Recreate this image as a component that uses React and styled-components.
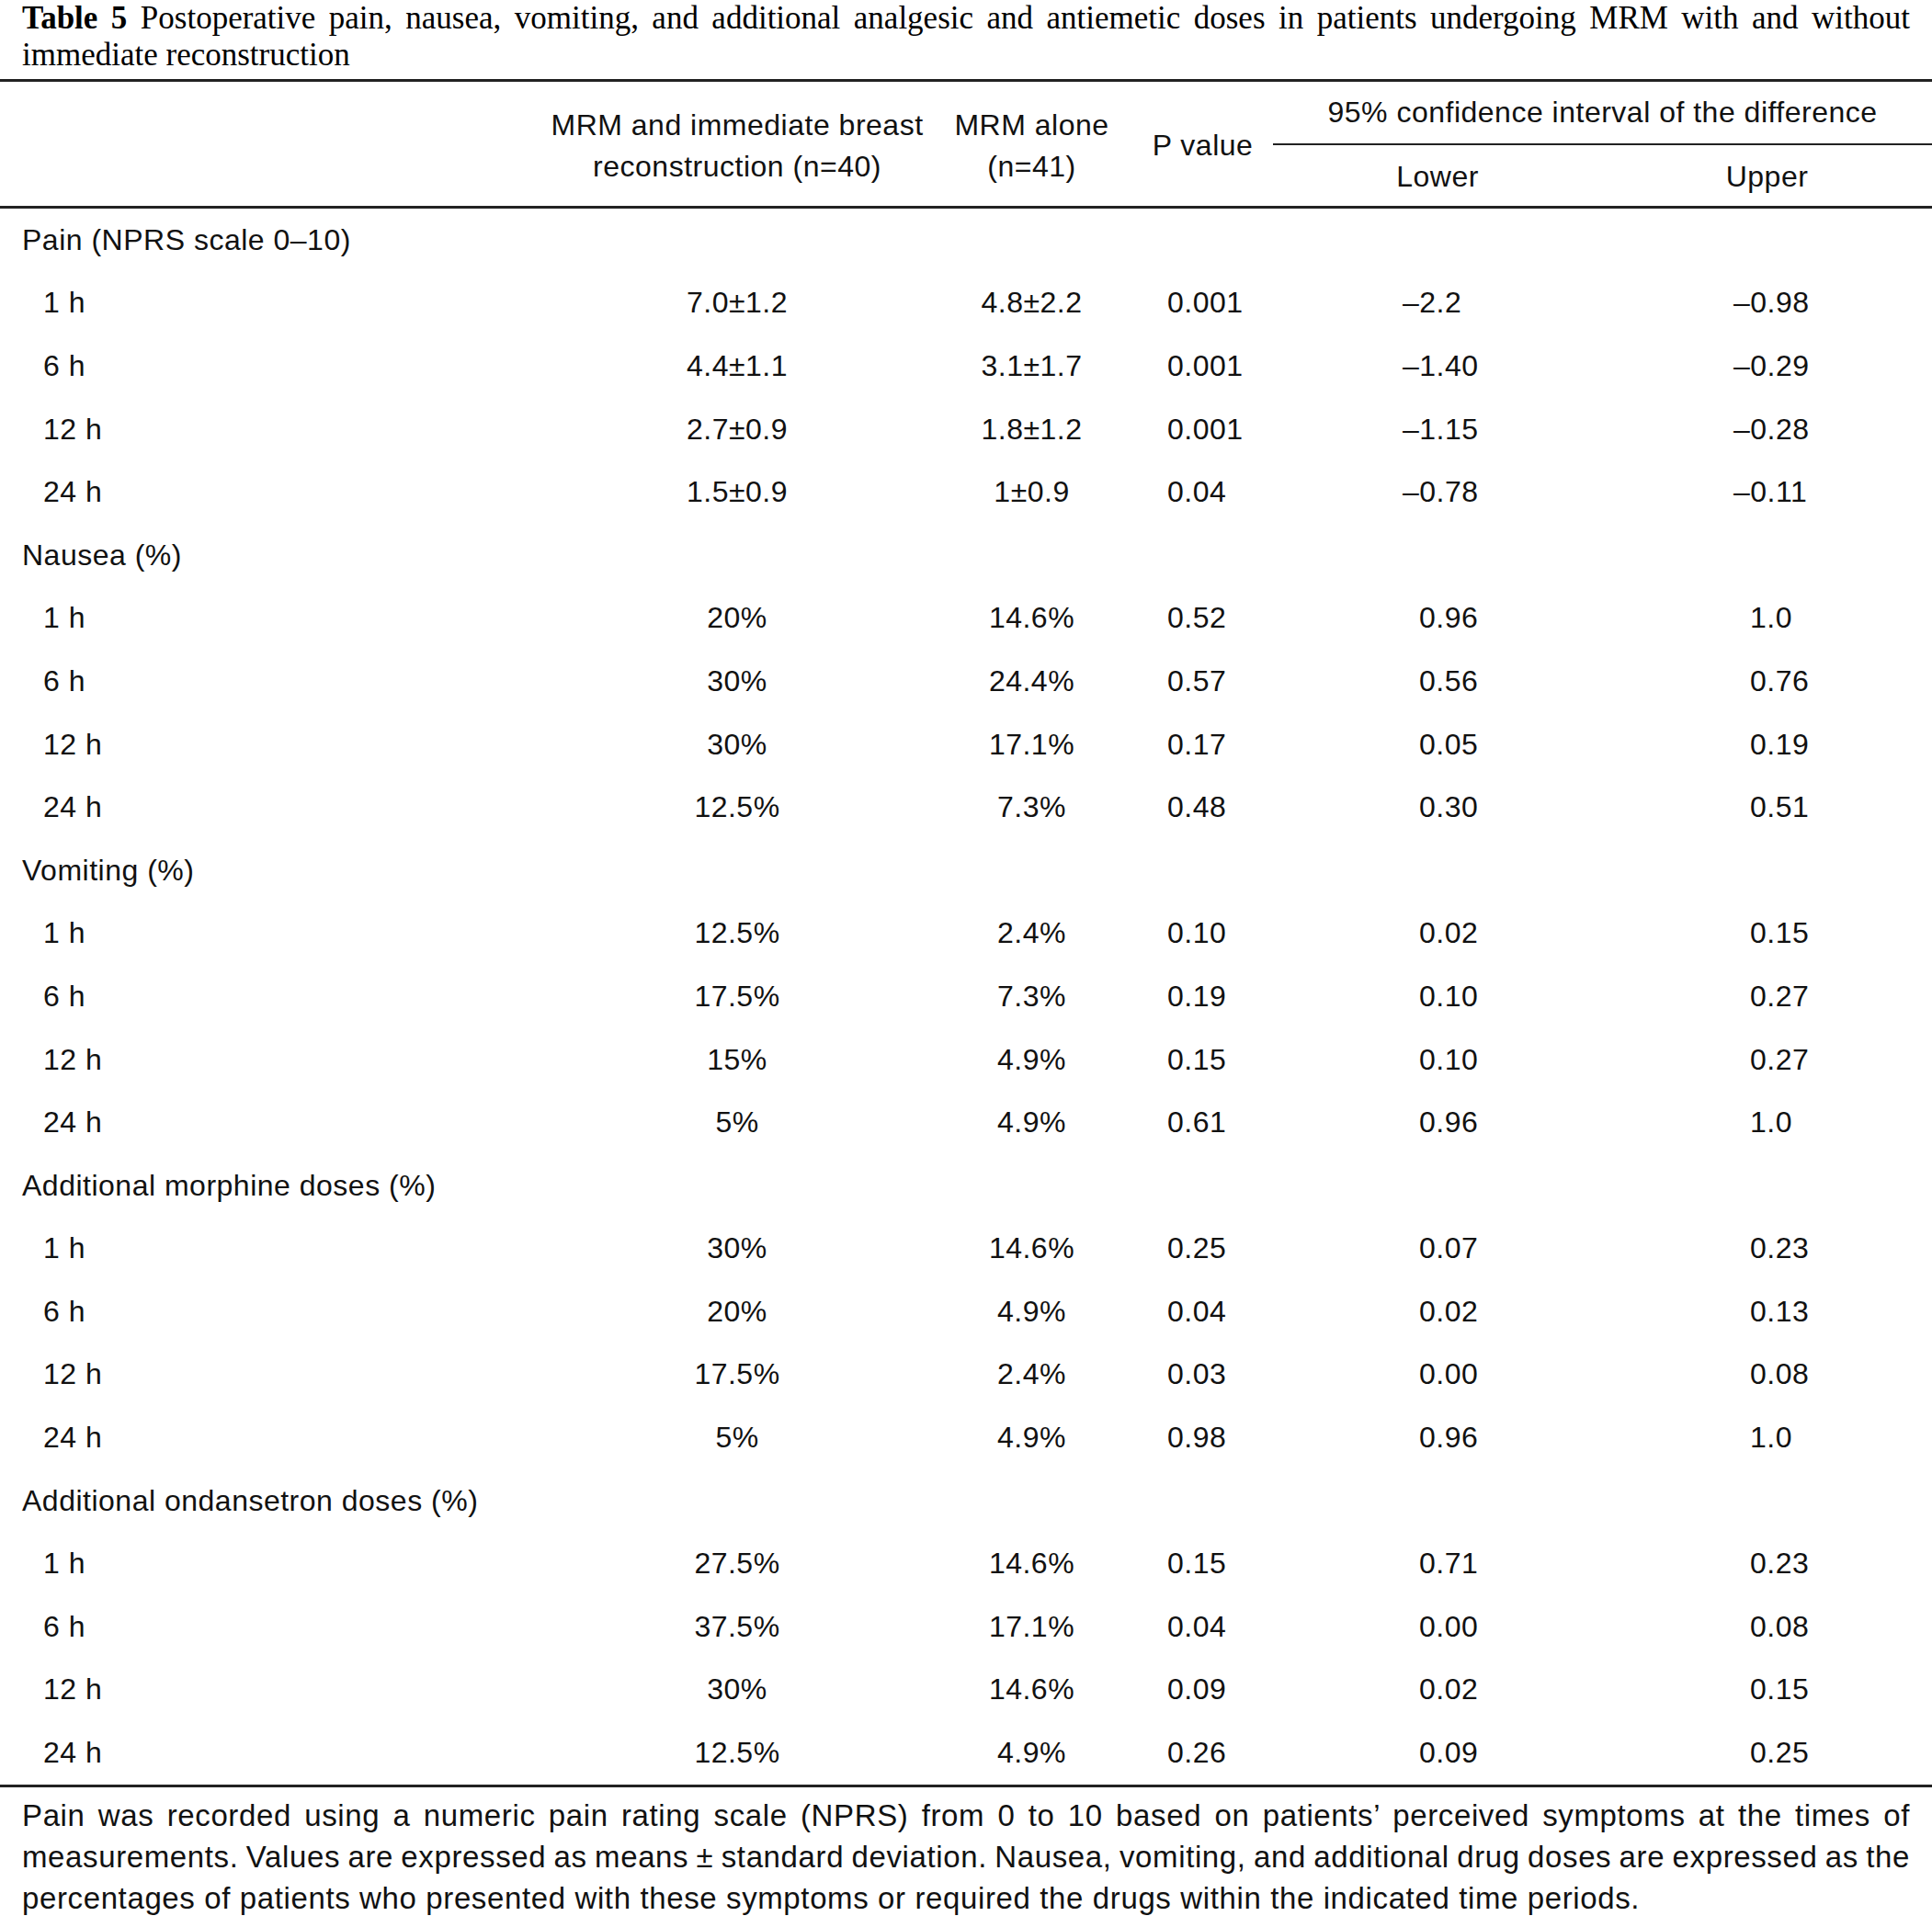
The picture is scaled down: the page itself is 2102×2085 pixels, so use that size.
import React from "react";
import styled, { createGlobalStyle } from "styled-components";

const GlobalStyle = createGlobalStyle`
  body {
    margin: 0;
    background: #fff;
    color: #111;
    font-family: "Liberation Sans", Arial, sans-serif;
  }
`;

const COLS = "591px 422px 219px 153px 358px 359px";

const sections = [
  {
    title: "Pain (NPRS scale 0–10)",
    rows: [
      ["1 h", "7.0±1.2", "4.8±2.2", "0.001", "–2.2", "–0.98"],
      ["6 h", "4.4±1.1", "3.1±1.7", "0.001", "–1.40", "–0.29"],
      ["12 h", "2.7±0.9", "1.8±1.2", "0.001", "–1.15", "–0.28"],
      ["24 h", "1.5±0.9", "1±0.9", "0.04", "–0.78", "–0.11"],
    ],
  },
  {
    title: "Nausea (%)",
    rows: [
      ["1 h", "20%", "14.6%", "0.52", "0.96", "1.0"],
      ["6 h", "30%", "24.4%", "0.57", "0.56", "0.76"],
      ["12 h", "30%", "17.1%", "0.17", "0.05", "0.19"],
      ["24 h", "12.5%", "7.3%", "0.48", "0.30", "0.51"],
    ],
  },
  {
    title: "Vomiting (%)",
    rows: [
      ["1 h", "12.5%", "2.4%", "0.10", "0.02", "0.15"],
      ["6 h", "17.5%", "7.3%", "0.19", "0.10", "0.27"],
      ["12 h", "15%", "4.9%", "0.15", "0.10", "0.27"],
      ["24 h", "5%", "4.9%", "0.61", "0.96", "1.0"],
    ],
  },
  {
    title: "Additional morphine doses (%)",
    rows: [
      ["1 h", "30%", "14.6%", "0.25", "0.07", "0.23"],
      ["6 h", "20%", "4.9%", "0.04", "0.02", "0.13"],
      ["12 h", "17.5%", "2.4%", "0.03", "0.00", "0.08"],
      ["24 h", "5%", "4.9%", "0.98", "0.96", "1.0"],
    ],
  },
  {
    title: "Additional ondansetron doses (%)",
    rows: [
      ["1 h", "27.5%", "14.6%", "0.15", "0.71", "0.23"],
      ["6 h", "37.5%", "17.1%", "0.04", "0.00", "0.08"],
      ["12 h", "30%", "14.6%", "0.09", "0.02", "0.15"],
      ["24 h", "12.5%", "4.9%", "0.26", "0.09", "0.25"],
    ],
  },
];

// the footnote keeps the reference's own line breaks
const noteLines = [
  "Pain was recorded using a numeric pain rating scale (NPRS) from 0 to 10 based on patients’ perceived symptoms at the times of",
  "measurements. Values are expressed as means ± standard deviation. Nausea, vomiting, and additional drug doses are expressed as the",
  "percentages of patients who presented with these symptoms or required the drugs within the indicated time periods.",
];

const App = () => {
  return (
    <>
      <GlobalStyle />
      <Page>
        <Caption>
          <b>Table 5</b> Postoperative pain, nausea, vomiting, and additional
          analgesic and antiemetic doses in patients undergoing MRM with and
          without immediate reconstruction
        </Caption>

        <Head>
          <HeadCell $span />
          <HeadCell $span>
            MRM and immediate breast
            <br />
            reconstruction (n=40)
          </HeadCell>
          <HeadCell $span>
            MRM alone
            <br />
            (n=41)
          </HeadCell>
          <HeadCell $span>P value</HeadCell>
          <GroupCell>95% confidence interval of the difference</GroupCell>
          <HeadCell>Lower</HeadCell>
          <HeadCell>Upper</HeadCell>
        </Head>

        <Body>
          {sections.map((section) => (
            <React.Fragment key={section.title}>
              <Row>
                <Label>{section.title}</Label>
              </Row>
              {section.rows.map((row) => (
                <Row key={section.title + row[0]}>
                  <Label $indent>{row[0]}</Label>
                  <Center>{row[1]}</Center>
                  <Center>{row[2]}</Center>
                  <PCell>{row[3]}</PCell>
                  <CiCell $neg={row[4].startsWith("–")}>{row[4]}</CiCell>
                  <CiCell $neg={row[5].startsWith("–")} $upper>
                    {row[5]}
                  </CiCell>
                </Row>
              ))}
            </React.Fragment>
          ))}
        </Body>

        <Note>
          {noteLines.map((line, i) => (
            <NoteLine key={i} $last={i === noteLines.length - 1}>
              {line}
            </NoteLine>
          ))}
        </Note>
      </Page>
    </>
  );
};

const Page = styled.div`
  width: 2102px;
  font-size: 32px;
  letter-spacing: 0.5px;
`;

const Caption = styled.div`
  padding: 0 24px;
  font-family: "Liberation Serif", "Times New Roman", serif;
  font-size: 35px;
  line-height: 40px;
  letter-spacing: 0;
  text-align: justify;
  color: #000;
  b {
    font-weight: bold;
  }
`;

const Head = styled.div`
  margin-top: 6px;
  display: grid;
  grid-template-columns: ${COLS};
  grid-template-rows: 69px 66px;
  border-top: 3px solid #222;
  border-bottom: 3px solid #222;
  line-height: 45px;
`;

const HeadCell = styled.div`
  grid-row: ${(p) => (p.$span ? "1 / span 2" : "2")};
  display: flex;
  align-items: center;
  justify-content: center;
  text-align: center;
  padding-top: ${(p) => (p.$span ? "4px" : "2px")};
`;

const GroupCell = styled.div`
  grid-column: 5 / span 2;
  grid-row: 1;
  display: flex;
  align-items: center;
  justify-content: center;
  border-bottom: 2px solid #222;
`;

const Body = styled.div`
  border-bottom: 3px solid #222;
`;

const Row = styled.div`
  display: grid;
  grid-template-columns: ${COLS};
  height: 68.6px;
  align-items: center;
`;

const Label = styled.div`
  padding-left: ${(p) => (p.$indent ? "47px" : "24px")};
  white-space: nowrap;
`;

const Center = styled.div`
  text-align: center;
`;

const PCell = styled.div`
  padding-left: 38px;
`;

const CiCell = styled.div`
  padding-left: ${(p) => (p.$upper ? "161px" : "159px")};
  text-indent: ${(p) => (p.$neg ? "-18px" : "0")};
`;

const Note = styled.div`
  padding: 8px 24px 0;
  font-size: 33px;
  line-height: 45px;
  letter-spacing: 0.62px;
`;

const NoteLine = styled.div`
  white-space: nowrap;
  word-spacing: ${(p) => (p.$last ? "0" : "-2px")};
  text-align: ${(p) => (p.$last ? "left" : "justify")};
  text-align-last: ${(p) => (p.$last ? "left" : "justify")};
`;

export default App;
